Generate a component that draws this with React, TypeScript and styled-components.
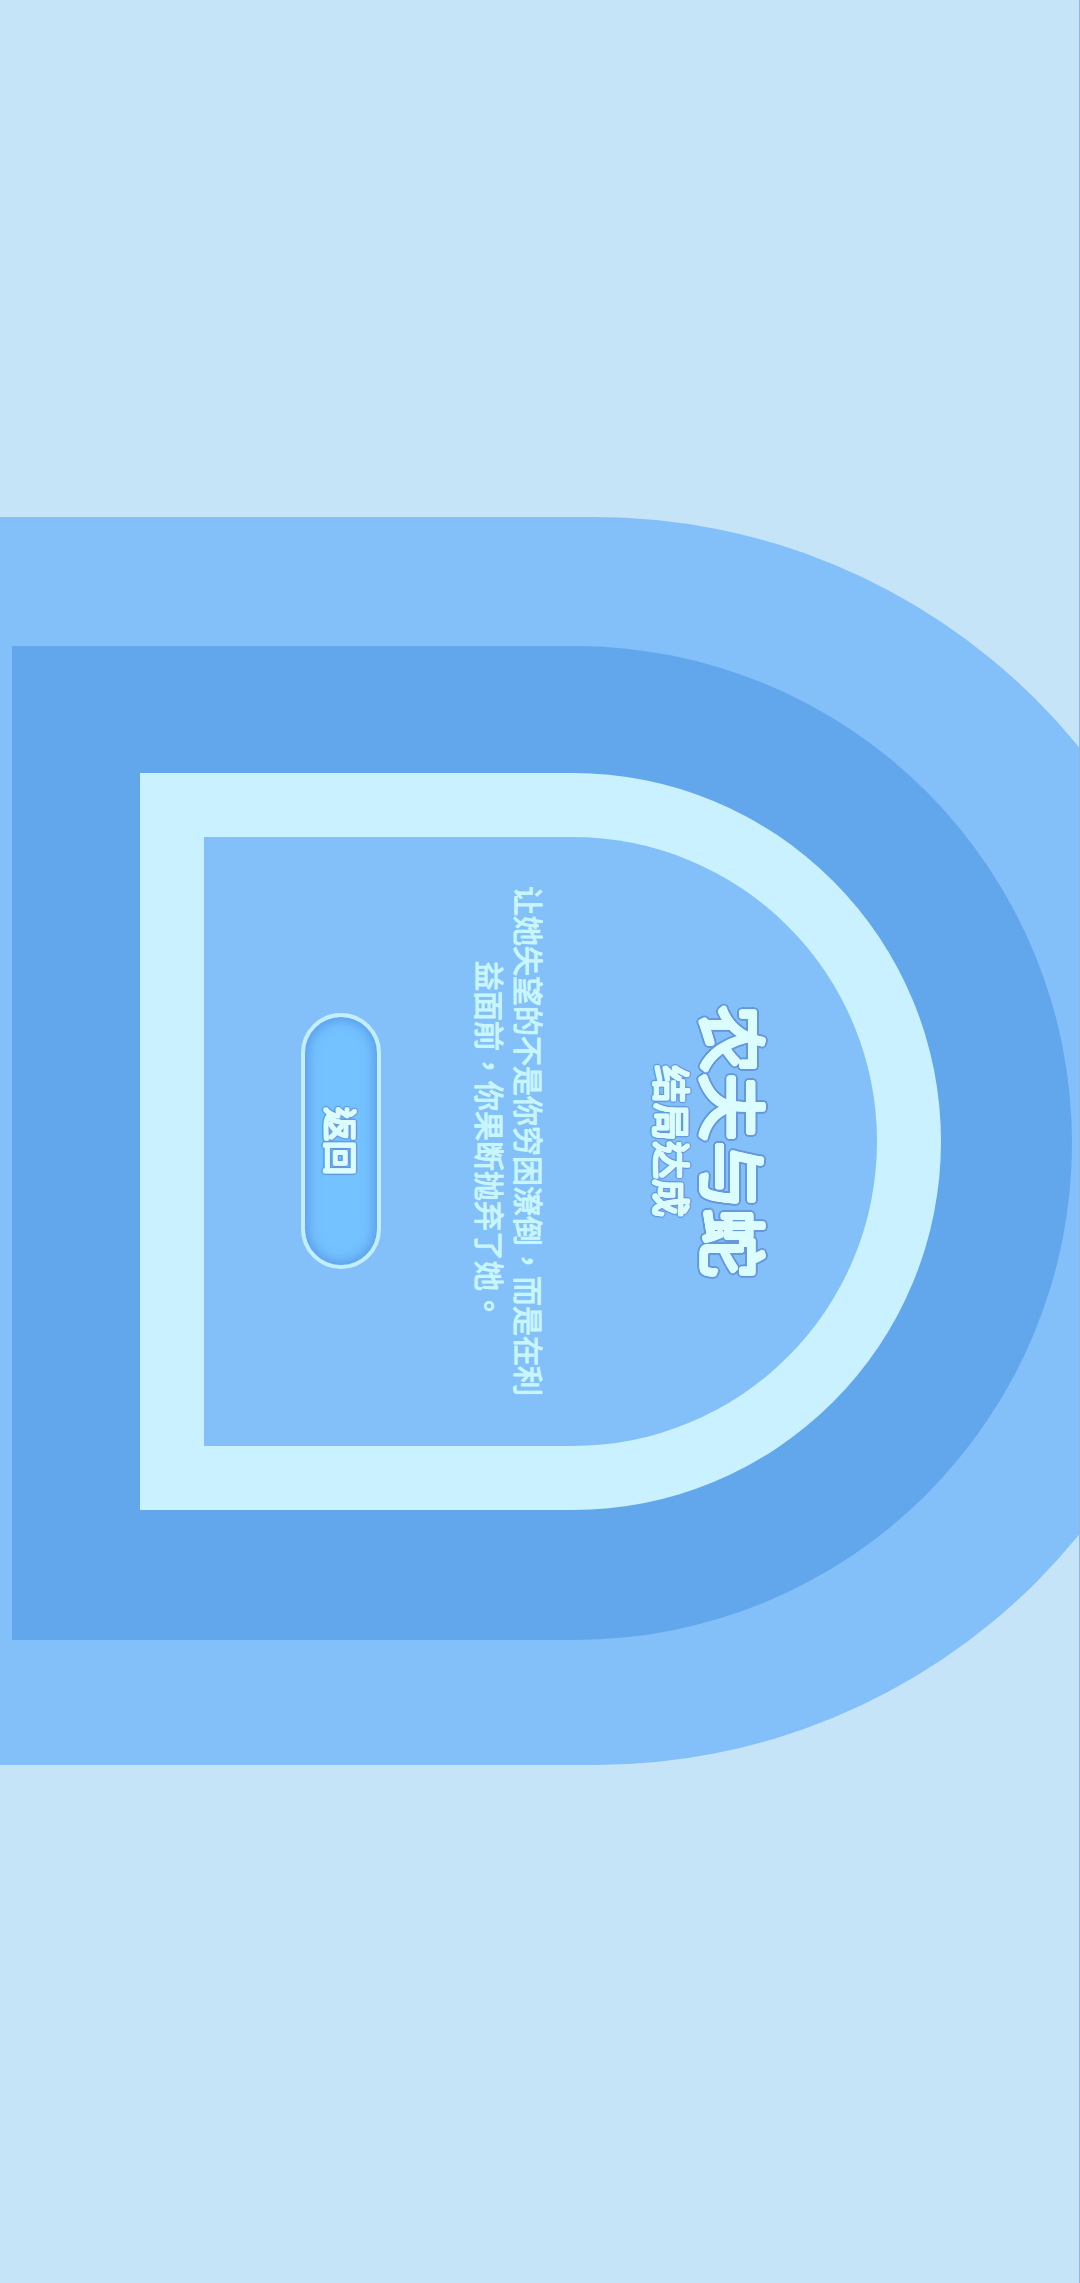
import React from "react";
import styled, { createGlobalStyle } from "styled-components";

const color = {
  page: "#c5e4f7",
  edge: "#8fb9d6",
  sky: "#83c0fa",
  ocean: "#62a7ec",
  ice: "#caf1ff",
  story: "#c8f6ff",
  glyph: "#dcfdff",
  outline: "#6698de",
};

const GlobalStyle = createGlobalStyle`
  * { box-sizing: border-box; }
  body {
    margin: 0;
    background: ${color.page};
    font-family: "Noto Sans CJK TC", "Noto Sans CJK SC", sans-serif;
  }
`;

/** Ring of whole-pixel shadows that thickens glyphs with rounded ends. */
function ring(radius: number, tint: string, blur = 0): string {
  const points: string[] = [];
  for (let step = 0; step < 24; step += 1) {
    const angle = (step * Math.PI) / 12;
    const x = Math.round(Math.cos(angle) * radius);
    const y = Math.round(Math.sin(angle) * radius);
    const point = `${x}px ${y}px ${blur}px ${tint}`;
    if (!points.includes(point)) points.push(point);
  }
  return points.join(", ");
}

const Screen = styled.main`
  display: flex;
  flex-direction: column;
  justify-content: center;
  min-height: 100vh;
  padding-bottom: 2px;
  overflow: hidden;
  border-right: 1px solid ${color.edge};
`;

const Arch = styled.div<{ $fill: string }>`
  background: ${(p) => p.$fill};
  border-radius: 0 9999px 9999px 0;
`;

const OuterArch = styled(Arch)`
  margin-right: -140px;
  padding: 129px 147px 125px 12px;
`;

const MiddleArch = styled(Arch)`
  padding: 127px 131px 130px 128px;
`;

const FrameArch = styled(Arch)`
  padding: 64px;
`;

const Card = styled(Arch)`
  display: flex;
  flex-direction: column;
  align-items: center;
  writing-mode: vertical-rl;
  text-orientation: sideways;
  width: 100%;
  min-height: 609px;
  padding: 48px 108px 48px 97px;
`;

const Title = styled.h1`
  margin: 0;
  color: ${color.glyph};
  font-size: 68px;
  line-height: 68px;
  font-weight: 400;
  text-shadow: ${ring(1, color.glyph)}, ${ring(2, color.glyph)}, ${ring(4, color.outline)};
`;

const Subtitle = styled.h2`
  margin: 0 8px 0 0;
  color: ${color.glyph};
  font-size: 38px;
  line-height: 40px;
  font-weight: 400;
  text-shadow: ${ring(1, color.glyph)}, ${ring(2, color.outline)}, ${ring(2, color.outline, 1)};
`;

const Story = styled.p`
  max-height: 510px;
  margin: 0 104px 0 0;
  color: ${color.story};
  font-size: 30px;
  line-height: 39px;
  font-weight: 400;
  text-align: center;
  -webkit-text-stroke: 1px ${color.story};
  text-shadow: 0 0 1px ${color.story};
`;

const BackButton = styled.button`
  writing-mode: vertical-rl;
  text-orientation: sideways;
  width: 80px;
  height: 256px;
  margin: 0 auto 0 0;
  padding: 0;
  border: 4px solid #c2efff;
  border-radius: 40px;
  background: #74c2ff;
  box-shadow: inset 0 0 12px 3px #5a9ae8;
  color: ${color.glyph};
  font-family: inherit;
  font-size: 34px;
  line-height: 38px;
  font-weight: 400;
  text-shadow: ${ring(1, color.glyph)}, ${ring(2, color.outline)}, ${ring(2, color.outline, 1)};
  cursor: pointer;
`;

export default function App() {
  return (
    <>
      <GlobalStyle />
      <Screen lang="zh-Hant">
        <OuterArch $fill={color.sky}>
          <MiddleArch $fill={color.ocean}>
            <FrameArch $fill={color.ice}>
              <Card $fill={color.sky}>
                <Title>农夫与蛇</Title>
                <Subtitle>结局达成</Subtitle>
                <Story>让她失望的不是你穷困潦倒，而是在利益面前，你果断抛弃了她。</Story>
                <BackButton type="button">返回</BackButton>
              </Card>
            </FrameArch>
          </MiddleArch>
        </OuterArch>
      </Screen>
    </>
  );
}
